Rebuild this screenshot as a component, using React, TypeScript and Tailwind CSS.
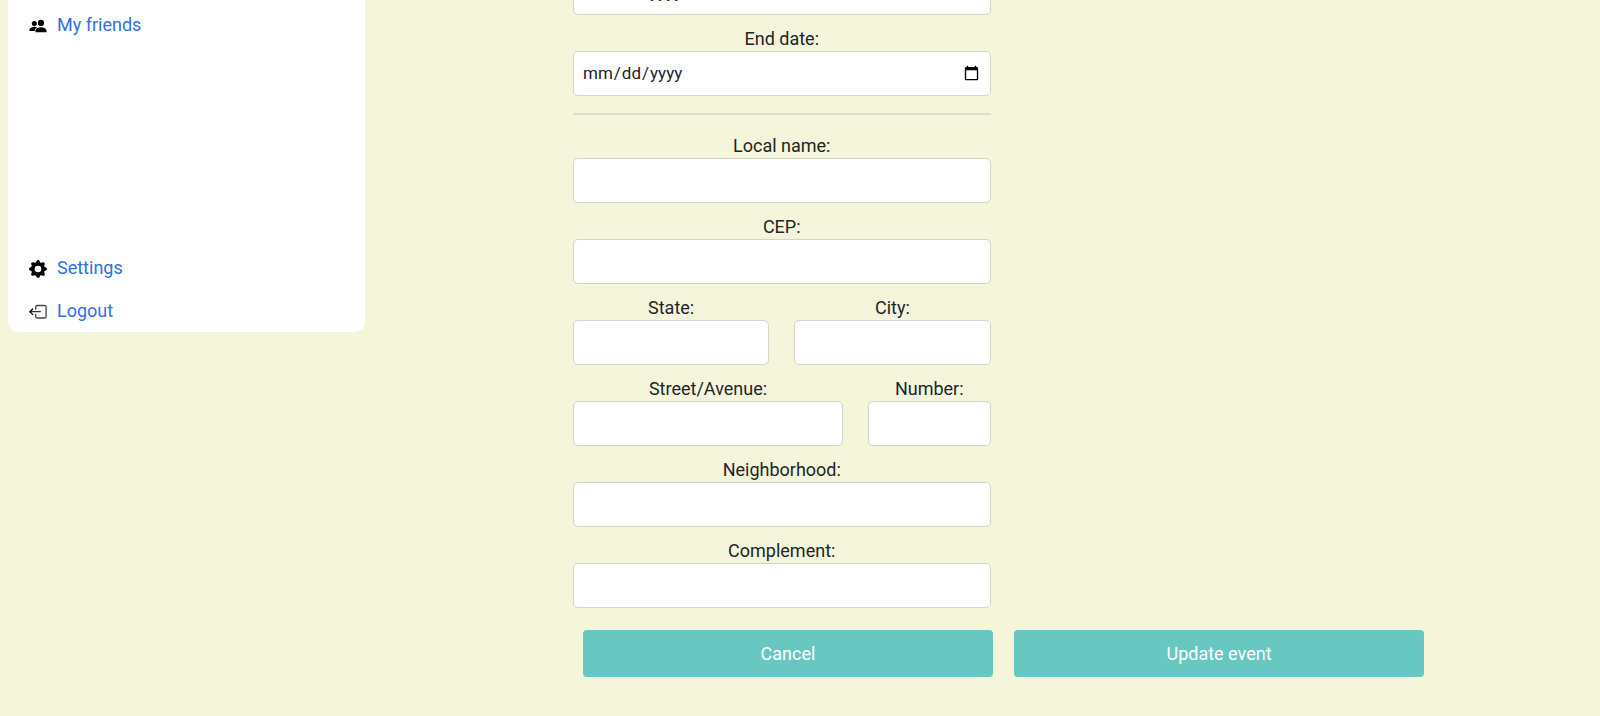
import type { ReactNode } from "react";
import { BsGearFill } from "react-icons/bs";
import { IoPeopleSharp } from "react-icons/io5";

function LogoutIcon() {
  return (
    <svg viewBox="0 0 18 18" className="size-[18px]" fill="none" strokeWidth="1.3" strokeLinecap="round" strokeLinejoin="round" aria-hidden="true">
      <path stroke="#444" d="M6.7 6V4.1a1.6 1.6 0 0 1 1.6-1.6h7.2a1.6 1.6 0 0 1 1.6 1.6v9.3a1.6 1.6 0 0 1-1.6 1.6H8.3a1.6 1.6 0 0 1-1.6-1.6v-1.9" />
      <path stroke="#333" d="M11.3 8.7H1.5" />
      <path stroke="#000" d="M3.6 6L.9 8.7l2.7 2.7" />
    </svg>
  );
}

function NavLink({ icon, children }: { icon: ReactNode; children: ReactNode }) {
  return (
    <a href="#" className="flex h-[43px] items-center gap-2.5 text-[#2f6fe4]">
      <span className="pt-[3px] text-black">{icon}</span>
      {children}
    </a>
  );
}

function Field({ id, label, type = "text", className = "" }: { id: string; label: string; type?: string; className?: string }) {
  return (
    <div className={`flex min-w-0 flex-col pb-2 ${className}`}>
      <label htmlFor={id} className="pt-1 text-center leading-6">
        {label}
      </label>
      <input
        id={id}
        type={type}
        className="h-[45px] w-full rounded-[5px] border border-[#d3d4ca] bg-white px-2 text-[17px] outline-none"
      />
    </div>
  );
}

export default function App() {
  return (
    <div className="flex min-h-screen items-start overflow-hidden bg-[#f5f5dc] pl-2 font-['Roboto',sans-serif] text-[18px] leading-[27px] text-[#212529]">
      <nav className="flex w-[357px] shrink-0 flex-col rounded-b-[10px] bg-white px-[21px] pt-[3px]">
        <NavLink icon={<IoPeopleSharp size={18} />}>My friends</NavLink>
        <div className="h-[200px]" />
        <NavLink icon={<BsGearFill size={18} />}>Settings</NavLink>
        <NavLink icon={<LogoutIcon />}>Logout</NavLink>
      </nav>

      <form className="-mt-[58px] min-w-0 flex-1 pb-9 pl-52 pr-44">
        <div className="w-1/2 pr-2">
          <Field id="start-date" label="Start date:" type="date" />
          <Field id="end-date" label="End date:" type="date" />
          <hr className="mt-[9px] mb-[15px] border-t-2 border-[#dfdfc8]" />
          <Field id="local-name" label="Local name:" />
          <Field id="cep" label="CEP:" />
          <div className="grid grid-cols-2 gap-[25px]">
            <Field id="state" label="State:" />
            <Field id="city" label="City:" />
          </div>
          <div className="grid grid-cols-12 gap-x-[25px]">
            <Field id="street" label="Street/Avenue:" className="col-span-8" />
            <Field id="number" label="Number:" className="col-span-4" />
          </div>
          <Field id="neighborhood" label="Neighborhood:" />
          <Field id="complement" label="Complement:" />
        </div>
        <div className="grid grid-cols-2 gap-[21px] pt-[14px] pl-[10px]">
          <button type="button" className="h-[47px] rounded-[4px] bg-[#69c7c1] text-white">
            Cancel
          </button>
          <button type="submit" className="h-[47px] rounded-[4px] bg-[#69c7c1] text-white">
            Update event
          </button>
        </div>
      </form>
    </div>
  );
}
